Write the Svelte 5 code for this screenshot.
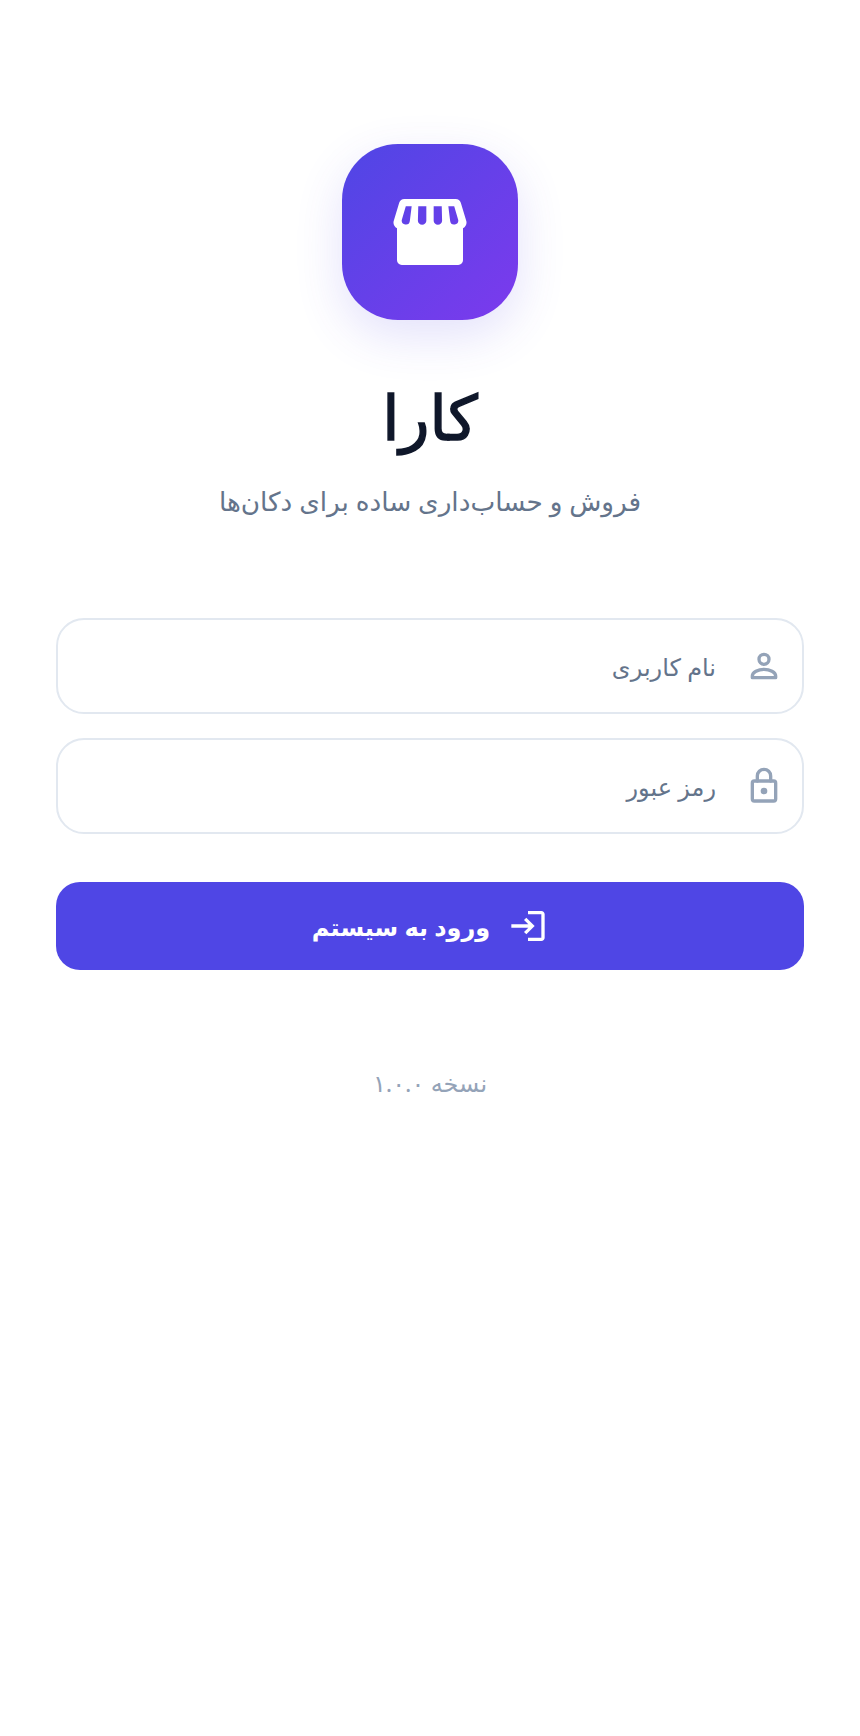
<script lang="ts">
	let username = $state('');
	let password = $state('');
</script>

<main class="login" dir="rtl">
	<div class="logo">
		<svg width="88" height="88" viewBox="0 0 24 24" fill="#fff">
			<path
				fill-rule="evenodd"
				d="M5 3h14c.7 0 1.2.4 1.4 1l1.5 5c.2.8-.1 1.5-.9 2v8.700a1.300 1.300 0 0 1-1.300 1.300H4.300A1.300 1.300 0 0 1 3 19.700V11c-.8-.5-1.100-1.200-.9-2l1.500-5C3.800 3.400 4.300 3 5 3zM5.400 5H7l-.5 4a1.100 1.100 0 0 1-2.200-.3zM8.800 5H11v3.900a1.150 1.150 0 0 1-2.300 0zM13 5h2.200l.1 3.900a1.150 1.150 0 0 1-2.300 0zM17 5h1.600l1.100 3.700a1.100 1.100 0 0 1-2.200.3z"
			/>
		</svg>
	</div>

	<h1>کارا</h1>
	<p class="subtitle">فروش و حساب‌داری ساده برای دکان‌ها</p>

	<form class="form" onsubmit={(e) => e.preventDefault()}>
		<label class="field">
			<svg class="icon" width="40" height="40" viewBox="0 0 24 24">
				<circle cx="12" cy="8" r="3" />
				<path d="M5 18c0-2.200 3.500-4 7-4s7 1.800 7 4v1H5z" />
			</svg>
			<input type="text" placeholder="نام کاربری" bind:value={username} />
		</label>

		<label class="field">
			<svg class="icon" width="40" height="40" viewBox="0 0 24 24">
				<rect x="5" y="9" width="14" height="12" rx="1.200" />
				<path d="M8 9V6a4 4 0 0 1 8 0v3" />
				<circle class="dot" cx="12" cy="15" r="2" />
			</svg>
			<input type="password" placeholder="رمز عبور" bind:value={password} />
		</label>

		<button type="submit">
			<svg width="40" height="40" viewBox="0 0 24 24" fill="#fff">
				<path d="M11 7L9.600 8.400l2.600 2.600H2v2h10.200l-2.600 2.600L11 17l5-5-5-5zm9 12h-8v2h8c1.100 0 2-.9 2-2V5c0-1.100-.9-2-2-2h-8v2h8v14z" />
			</svg>
			<span>ورود به سیستم</span>
		</button>
	</form>

	<p class="version">نسخه ۱.۰.۰</p>
</main>

<style>
	:global(body) {
		background: #fff;
	}

	.login {
		box-sizing: border-box;
		min-height: 1736px;
		padding: 144px 56px 0;
		display: flex;
		flex-direction: column;
		align-items: center;
		font-family: 'Noto Sans', 'DejaVu Sans', sans-serif;
	}

	.logo {
		width: 176px;
		height: 176px;
		border-radius: 56px;
		background: linear-gradient(135deg, #4f46e5, #7c3aed);
		box-shadow: 0 16px 48px rgba(79, 70, 229, 0.16);
		display: flex;
		align-items: center;
		justify-content: center;
	}

	h1 {
		margin: 46px 0 0;
		font-size: 62px;
		line-height: 100px;
		font-weight: 400;
		-webkit-text-stroke: 1.5px #0f172a;
		color: #0f172a;
	}

	.subtitle {
		margin: 15px 0 0;
		font-size: 26.3px;
		line-height: 40px;
		color: #64748b;
	}

	.form {
		align-self: stretch;
		margin-top: 97px;
		display: flex;
		flex-direction: column;
		gap: 24px;
	}

	.field {
		box-sizing: border-box;
		height: 96px;
		padding: 0 18px;
		border: 2px solid #e2e8f0;
		border-radius: 28px;
		display: flex;
		align-items: center;
		gap: 28px;
	}

	.icon {
		flex: none;
		fill: none;
		stroke: #94a3b8;
		stroke-width: 2;
		stroke-linejoin: round;
		stroke-linecap: round;
	}

	.dot {
		fill: #94a3b8;
		stroke: none;
	}

	input {
		flex: 1;
		min-width: 0;
		border: 0;
		outline: 0;
		padding: 0;
		background: none;
		font: inherit;
		font-size: 24px;
		color: #0f172a;
	}

	input::placeholder {
		color: #64748b;
		opacity: 1;
	}

	button {
		margin-top: 24px;
		height: 88px;
		border: 0;
		border-radius: 24px;
		background: #4f46e5;
		color: #fff;
		font: inherit;
		font-size: 24px;
		font-weight: 700;
		display: flex;
		align-items: center;
		justify-content: center;
		gap: 18px;
	}

	.version {
		margin: 93px 0 0;
		font-size: 24px;
		line-height: 40px;
		color: #94a3b8;
	}
</style>
